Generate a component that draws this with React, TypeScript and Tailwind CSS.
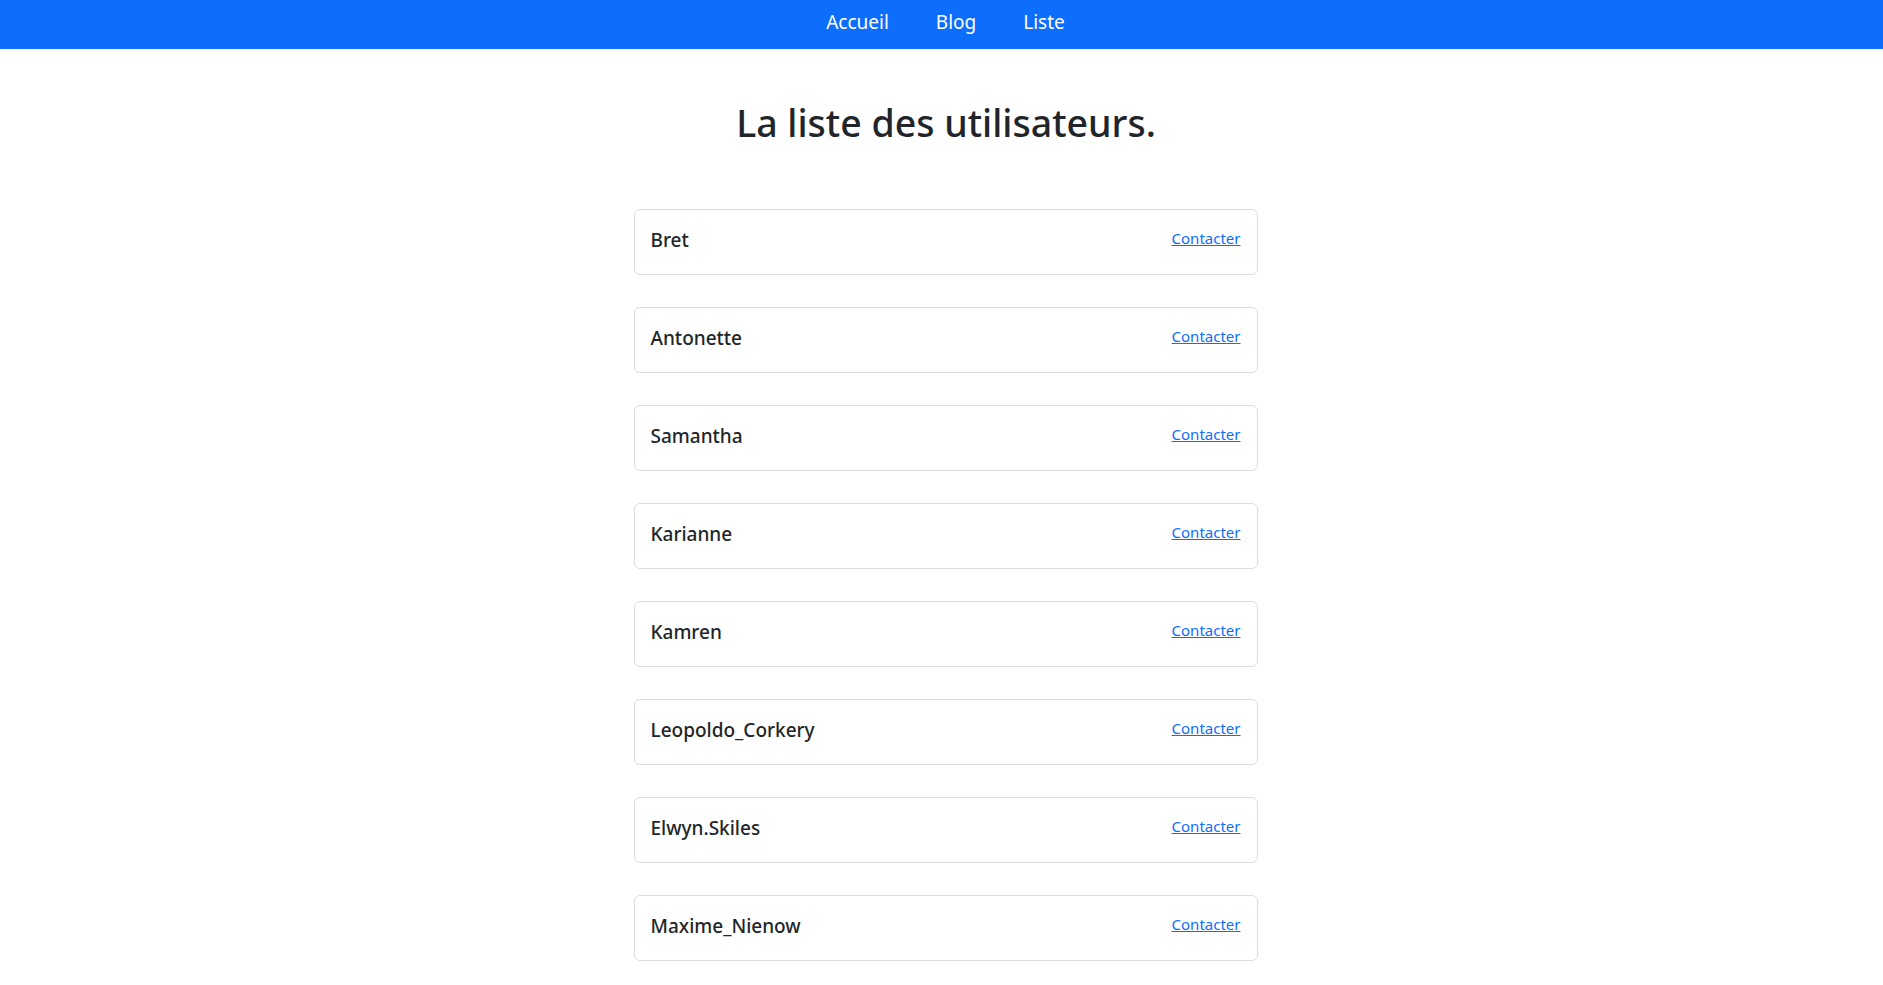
const users = [
  'Bret',
  'Antonette',
  'Samantha',
  'Karianne',
  'Kamren',
  'Leopoldo_Corkery',
  'Elwyn.Skiles',
  'Maxime_Nienow',
];

export default function App() {
  return (
    <div className="min-h-screen bg-white text-[#212529] font-['Noto_Sans',sans-serif]">
      <nav className="flex h-[49px] items-center justify-center gap-[47px] bg-[#0d6efd] pb-[4px] pl-[8px]">
        <a href="#" className="text-[19px] text-white">Accueil</a>
        <a href="#" className="text-[19px] text-white">Blog</a>
        <a href="#" className="text-[19px] text-white">Liste</a>
      </nav>

      <h1 className="mt-[50px] pl-[9px] text-center text-[37.5px] font-medium leading-[48px]">
        La liste des utilisateurs.
      </h1>

      <div className="mx-auto mt-[62px] box-content flex w-[624px] flex-col gap-[32px] pl-[8px]">
        {users.map((name) => (
          <div
            key={name}
            className="flex h-[66px] items-center justify-between rounded-[6px] border border-[#dcdcdc] bg-white px-[16px] pb-[2px]"
          >
            <span className="mb-[2px] text-[19px] font-medium">{name}</span>
            <a href="#" className="mb-[6px] text-[15px] text-[#0d6efd] underline">
              Contacter
            </a>
          </div>
        ))}
      </div>
    </div>
  );
}
